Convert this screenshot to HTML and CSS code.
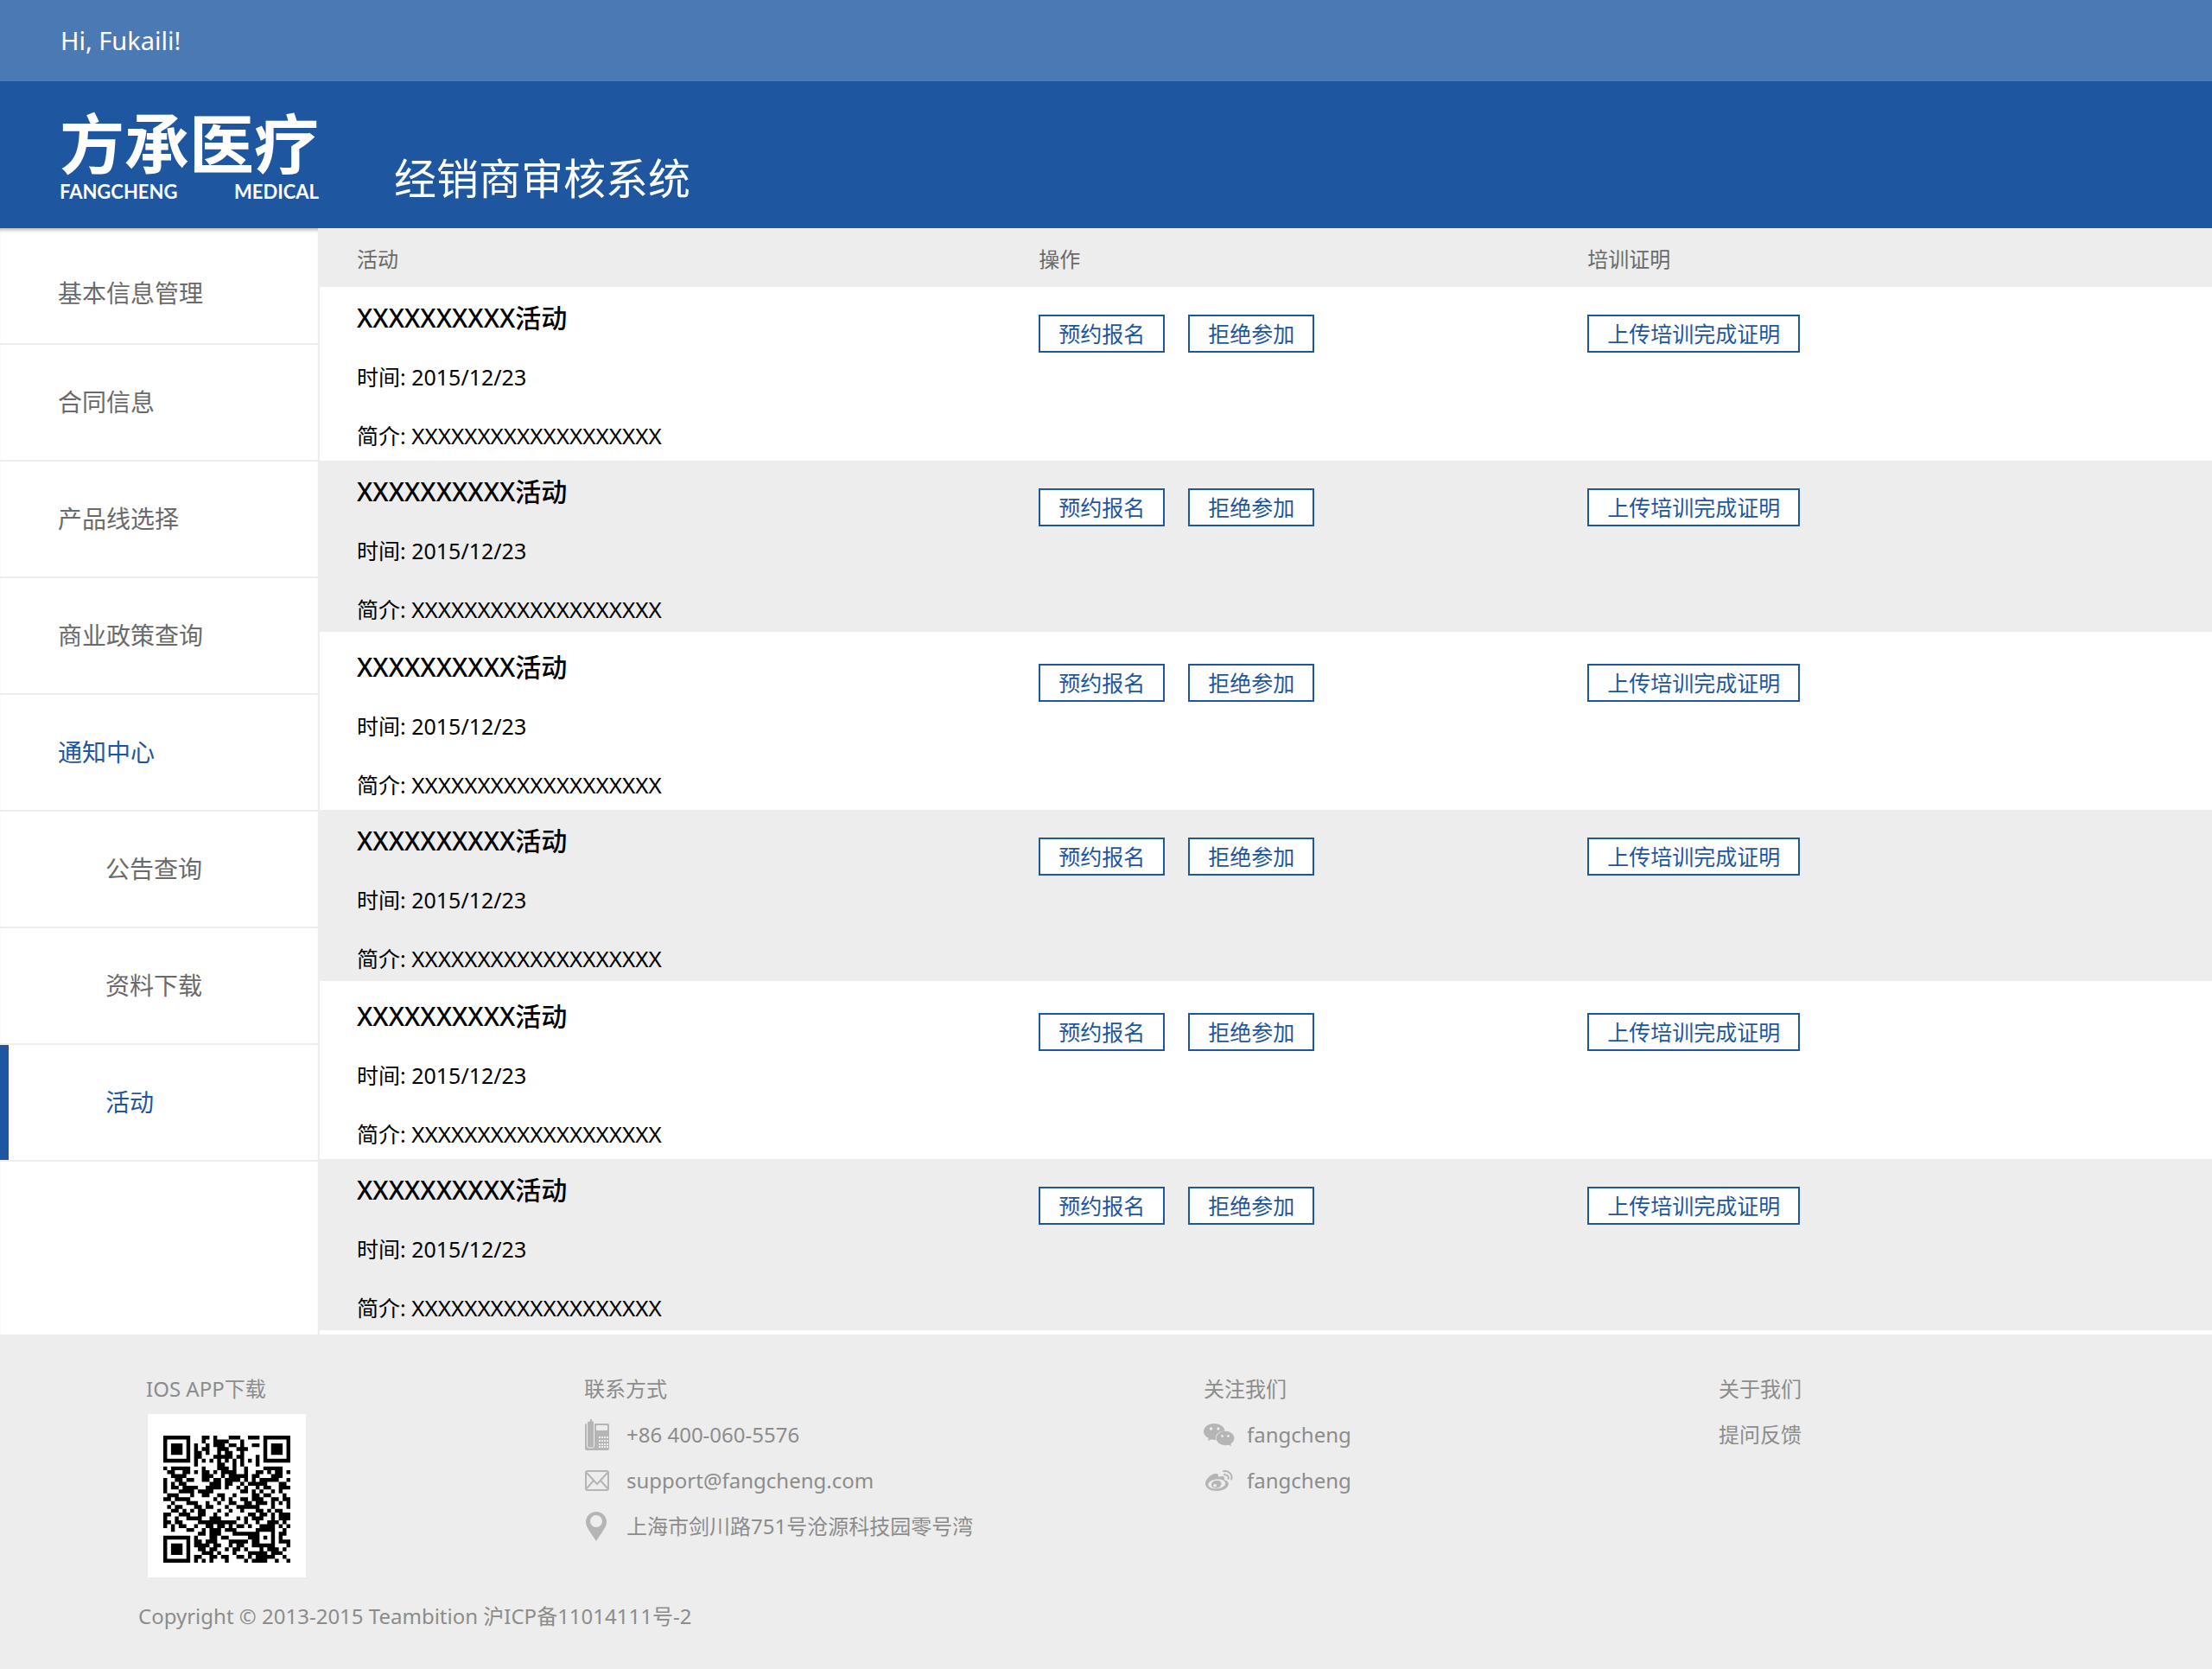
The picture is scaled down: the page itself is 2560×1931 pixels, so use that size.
FILE: index.html
```html
<!DOCTYPE html>
<html lang="zh-CN">
<head>
<meta charset="utf-8">
<title>经销商审核系统</title>
<link rel="stylesheet" href="styles.css">
</head>
<body>
<div class="topbar">Hi, Fukaili!</div>
<header class="header">
  <a class="logo" href="#">
    <span class="logo-name">方承医疗</span>
    <span class="logo-sub"><span>FANGCHENG</span><span>MEDICAL</span></span>
  </a>
  <h1 class="system-title">经销商审核系统</h1>
</header>

<div class="body">
  <nav class="sidebar">
    <a class="nav-item nav-first" href="#">基本信息管理</a>
    <a class="nav-item" href="#">合同信息</a>
    <a class="nav-item" href="#">产品线选择</a>
    <a class="nav-item" href="#">商业政策查询</a>
    <a class="nav-item nav-open" href="#">通知中心</a>
    <a class="nav-item nav-sub" href="#">公告查询</a>
    <a class="nav-item nav-sub" href="#">资料下载</a>
    <a class="nav-item nav-sub nav-current" href="#">活动</a>
  </nav>

  <main class="main">
    <table class="events">
      <colgroup><col class="col-event"><col class="col-action"><col class="col-proof"></colgroup>
      <thead>
        <tr><th>活动</th><th>操作</th><th>培训证明</th></tr>
      </thead>
      <tbody>
        <tr>
          <td><h2>XXXXXXXXXX活动</h2><p>时间: 2015/12/23</p><p>简介: <span class="intro">XXXXXXXXXXXXXXXXXXX</span></p></td>
          <td><div class="actions"><button type="button">预约报名</button><button type="button">拒绝参加</button></div></td>
          <td><div class="actions"><button type="button">上传培训完成证明</button></div></td>
        </tr>
        <tr>
          <td><h2>XXXXXXXXXX活动</h2><p>时间: 2015/12/23</p><p>简介: <span class="intro">XXXXXXXXXXXXXXXXXXX</span></p></td>
          <td><div class="actions"><button type="button">预约报名</button><button type="button">拒绝参加</button></div></td>
          <td><div class="actions"><button type="button">上传培训完成证明</button></div></td>
        </tr>
        <tr>
          <td><h2>XXXXXXXXXX活动</h2><p>时间: 2015/12/23</p><p>简介: <span class="intro">XXXXXXXXXXXXXXXXXXX</span></p></td>
          <td><div class="actions"><button type="button">预约报名</button><button type="button">拒绝参加</button></div></td>
          <td><div class="actions"><button type="button">上传培训完成证明</button></div></td>
        </tr>
        <tr>
          <td><h2>XXXXXXXXXX活动</h2><p>时间: 2015/12/23</p><p>简介: <span class="intro">XXXXXXXXXXXXXXXXXXX</span></p></td>
          <td><div class="actions"><button type="button">预约报名</button><button type="button">拒绝参加</button></div></td>
          <td><div class="actions"><button type="button">上传培训完成证明</button></div></td>
        </tr>
        <tr>
          <td><h2>XXXXXXXXXX活动</h2><p>时间: 2015/12/23</p><p>简介: <span class="intro">XXXXXXXXXXXXXXXXXXX</span></p></td>
          <td><div class="actions"><button type="button">预约报名</button><button type="button">拒绝参加</button></div></td>
          <td><div class="actions"><button type="button">上传培训完成证明</button></div></td>
        </tr>
        <tr>
          <td><h2>XXXXXXXXXX活动</h2><p>时间: 2015/12/23</p><p>简介: <span class="intro">XXXXXXXXXXXXXXXXXXX</span></p></td>
          <td><div class="actions"><button type="button">预约报名</button><button type="button">拒绝参加</button></div></td>
          <td><div class="actions"><button type="button">上传培训完成证明</button></div></td>
        </tr>
      </tbody>
    </table>
  </main>
</div>

<footer class="footer">
  <div class="footer-columns">
    <section>
      <h3>IOS APP下载</h3>
      <div class="qr"><svg id="qr" width="147" height="147" viewBox="0 0 33 33" role="img" aria-label="IOS APP"></svg></div>
    </section>
    <section>
      <h3>联系方式</h3>
      <ul>
        <li>
          <svg class="icon" width="36" height="36" viewBox="0 0 36 36" aria-hidden="true">
            <rect x="1" y="5" width="28" height="31" rx="2" fill="currentColor"/>
            <path fill="currentColor" stroke="#ededed" d="M3.500 4q0-2 2.500-2h4q1.500 0 1.500 2v27q0 2-2 2h-4q-2 0-2-2z"/>
            <rect x="7" y="0" width="2" height="4" fill="currentColor"/>
            <rect x="14" y="7" width="13" height="6" rx="1" fill="#ededed"/>
            <path stroke="#ededed" stroke-width="2" stroke-dasharray="2 1" fill="none" d="M17 21h11M17 25h11M17 29h11M17 32h11"/>
          </svg>
          <a href="tel:+864000605576">+86 400-060-5576</a>
        </li>
        <li>
          <svg class="icon" width="36" height="24" viewBox="0 0 36 24" fill="none" stroke="currentColor" stroke-width="2" aria-hidden="true">
            <rect x="2" y="1" width="26" height="22" rx="2"/>
            <path d="M3 3l12 13L27 3M3 21l8-9M27 21l-8-9"/>
          </svg>
          <a href="mailto:support@fangcheng.com">support@fangcheng.com</a>
        </li>
        <li>
          <svg class="icon" width="36" height="34" viewBox="0 0 36 34" aria-hidden="true">
            <path fill="currentColor" fill-rule="evenodd" d="M14 0a12 12 0 0 1 12 12c0 5-4 10-12 22C6 22 2 17 2 12A12 12 0 0 1 14 0zm0 4a7 7 0 1 0 0 14 7 7 0 0 0 0-14z"/>
          </svg>
          <span>上海市剑川路751号沧源科技园零号湾</span>
        </li>
      </ul>
    </section>
    <section>
      <h3>关注我们</h3>
      <ul>
        <li>
          <svg class="icon" width="37" height="26" viewBox="0 0 37 26" aria-hidden="true">
            <path fill="currentColor" d="M12 0c7 0 12 4 12.500 8.500C18 9 14 12 14 16.500c0 1 .2 1.700.5 2.500-2 0-4-.2-5.500-.7L5 20l.7-3.200C2 15 0 12.500 0 9.500 0 4 5.500 0 12 0z"/>
            <ellipse cx="25" cy="17" rx="10.500" ry="8.200" fill="currentColor"/>
            <path fill="currentColor" d="M27 24l5 2-1-4z"/>
            <g fill="#ededed"><circle cx="8.500" cy="6" r="1.700"/><circle cx="17" cy="6" r="1.700"/><circle cx="21.500" cy="14.500" r="1.400"/><circle cx="28.500" cy="14.500" r="1.400"/></g>
          </svg>
          <a href="#">fangcheng</a>
        </li>
        <li>
          <svg class="icon" width="37" height="24" viewBox="0 0 37 24" aria-hidden="true">
            <path fill="currentColor" fill-rule="evenodd" d="M15 4c2 .3 2.500 2 1.800 4 3-1.200 6.500-1.500 7.200.5.400 1 0 2-.2 2.700 2.700.6 5 2 5 4.600C28.800 20 23 24 15.500 24S2 20.500 2 15.500C2 10 10 3 15 4zm.5 6.500C9.500 11 5 13.500 5.300 17c.3 3 5 4.800 10.500 4.300S25.500 18 25.200 15s-4.200-5-9.700-4.500z"/>
            <path fill="currentColor" fill-rule="evenodd" d="M15 12c3.500-.3 6 1.200 5.500 4s-3.200 4.700-6.500 4.700-5.700-2-5-4.700 3-3.800 6-4zm-2 4a2 1.700 0 1 0 .1 3.400A2 1.700 0 0 0 13 16z"/>
            <path fill="none" stroke="currentColor" stroke-width="2" stroke-linecap="round" d="M23 1.200c6-1.200 11 4 9 9.300M24 5.300c3-.6 5.500 2 4.500 4.700"/>
          </svg>
          <a href="#">fangcheng</a>
        </li>
      </ul>
    </section>
    <section>
      <h3>关于我们</h3>
      <ul><li><a href="#">提问反馈</a></li></ul>
    </section>
  </div>
  <p class="copyright">Copyright © 2013-2015 Teambition 沪ICP备11014111号-2</p>
</footer>
<script src="qr.js"></script>
</body>
</html>
```
FILE: styles.css
```css
* {
  box-sizing: border-box;
}

body,
h1,
h2,
h3,
p,
ul {
  margin: 0;
  padding: 0;
}

body {
  background: #fff;
  color: #000;
  font-family: "Noto Sans", "Noto Sans CJK SC", sans-serif;
  font-size: 24px;
}

a {
  color: inherit;
  text-decoration: none;
}

.topbar {
  padding: 24px 70px;
  background: #4b79b4;
  color: #fff;
  font-size: 29px;
  line-height: 46px;
}

.header {
  display: flex;
  gap: 87px;
  padding: 28px 69px 26px;
  background: #1e57a0;
  color: #fff;
}

.logo {
  display: flex;
  flex-direction: column;
  width: 300px;
}

.logo-name {
  font-size: 75px;
  font-weight: 700;
  line-height: 88px;
}

.logo-sub {
  display: flex;
  justify-content: space-between;
  font-family: Lato, sans-serif;
  font-size: 22px;
  font-weight: 700;
  line-height: 24px;
}

.system-title {
  padding-top: 52px;
  font-size: 49px;
  font-weight: 400;
  line-height: 64px;
}

.body {
  display: flex;
}

.sidebar {
  flex: 0 0 370px;
  border-right: 2px solid #ededed;
  box-shadow: inset 0 5px 4px -3px rgba(0, 0, 0, 0.3);
}

.nav-item {
  display: flex;
  align-items: center;
  height: 135px;
  padding: 0 0 3px 67px;
  border-bottom: 2px solid #ededed;
  color: #6a6a6a;
  font-size: 28px;
}

.nav-first {
  padding-top: 18px;
}

.nav-open,
.nav-current {
  color: #1e57a0;
}

.nav-sub {
  padding-left: 122px;
}

.nav-current {
  padding-left: 112px;
  border-left: 10px solid #1e57a0;
  border-bottom: 0;
  height: 133px;
  box-shadow: 0 2px #ededed;
}

.main {
  flex: 1;
}

.events {
  width: 100%;
  border-spacing: 0;
  table-layout: fixed;
}

.col-event {
  width: 38%;
}

.col-action {
  width: 29%;
}

.events th {
  height: 68px;
  padding: 0;
  background: #ededed;
  color: #6a6a6a;
  font-weight: 400;
  text-align: left;
}

.events td {
  padding: 16px 0 9px;
  vertical-align: top;
}

.events th:first-child,
.events td:first-child {
  padding-left: 43px;
}

.events tbody tr:nth-child(even) td {
  padding-bottom: 6px;
  border-bottom: 5px solid #fff;
  background: #ededed;
  background-clip: padding-box;
}

.events h2 {
  font-size: 30px;
  font-weight: 500;
  line-height: 40px;
}

.events p {
  height: 40px;
  margin-top: 28px;
  font-size: 25px;
  line-height: 40px;
}

.intro {
  font-size: 26px;
  line-height: 1;
}

.actions {
  display: flex;
  gap: 27px;
  padding-top: 16px;
}

button {
  height: 44px;
  padding: 0 21px;
  border: 2px solid #1e57a0;
  background: #fff;
  color: #1e57a0;
  font-family: inherit;
  font-size: 25px;
  line-height: 36px;
}

.footer {
  padding: 36px 0 35px;
  background: #ededed;
  color: #8c8c8c;
  line-height: 53px;
}

.footer-columns {
  display: grid;
  grid-template-columns: 507fr 717fr 596fr 571fr;
  padding-left: 169px;
}

.footer h3 {
  font-size: 24px;
  font-weight: 400;
}

.footer ul {
  list-style: none;
}

.footer li {
  display: flex;
  align-items: center;
}

.icon {
  flex: none;
  margin-right: 13px;
  color: #b5b5b5;
}

.qr {
  width: 183px;
  margin: 3px 0 0 2px;
  padding: 25px 18px 17px;
  background: #fff;
}

.qr svg {
  display: block;
}

.copyright {
  padding: 18px 160px 0;
}
```
FILE: qr.js
```js
// One string per row of the code, 1 for a dark module.
const rows = [
  "111111100011010001110011101111111",
  "100000100010011110001000001000001",
  "101110101001011101101001101011101",
  "101110101011001110011100001011101",
  "101110101101001011001000001011101",
  "100000101100011111011000101000001",
  "111111101010101010101010101111111",
  "000000001000001100101000100000000",
  "101111100010001110100100001111100",
  "011001101011010111100100110101101",
  "001111000011100101111101100011100",
  "100110110011011011110101011111001",
  "101011000000111011001011111000110",
  "101101111001111010010100101100111",
  "100011110111100000001101010010100",
  "011100010011001100100001101100010",
  "110111100000010101001101110011011",
  "001000111001001001100110111010101",
  "010110001101100010011111100010001",
  "001101010110001001001000110101100",
  "110011100110010010000011011010111",
  "100100111100111000010101110010111",
  "110110000111111111100100100111010",
  "101011001001101101011010011110101",
  "001000110010111011100000111110010",
  "000000000110111000111111100010110",
  "111111101000110110000011101010100",
  "100000101101110001111101100010111",
  "101110101111011001011001111110001",
  "101110100110110010110100010111010",
  "101110100011101000100011111011100",
  "100000101100110110011010111110010",
  "111111101010100010000101111001001"
];

let d = "";
rows.forEach((row, y) => {
  for (const run of row.matchAll(/1+/g)) {
    const n = run[0].length;
    d += `M${run.index} ${y}h${n}v1h-${n}z`;
  }
});
const path = document.createElementNS("http://www.w3.org/2000/svg", "path");
path.setAttribute("d", d);
document.getElementById("qr").append(path);
```
